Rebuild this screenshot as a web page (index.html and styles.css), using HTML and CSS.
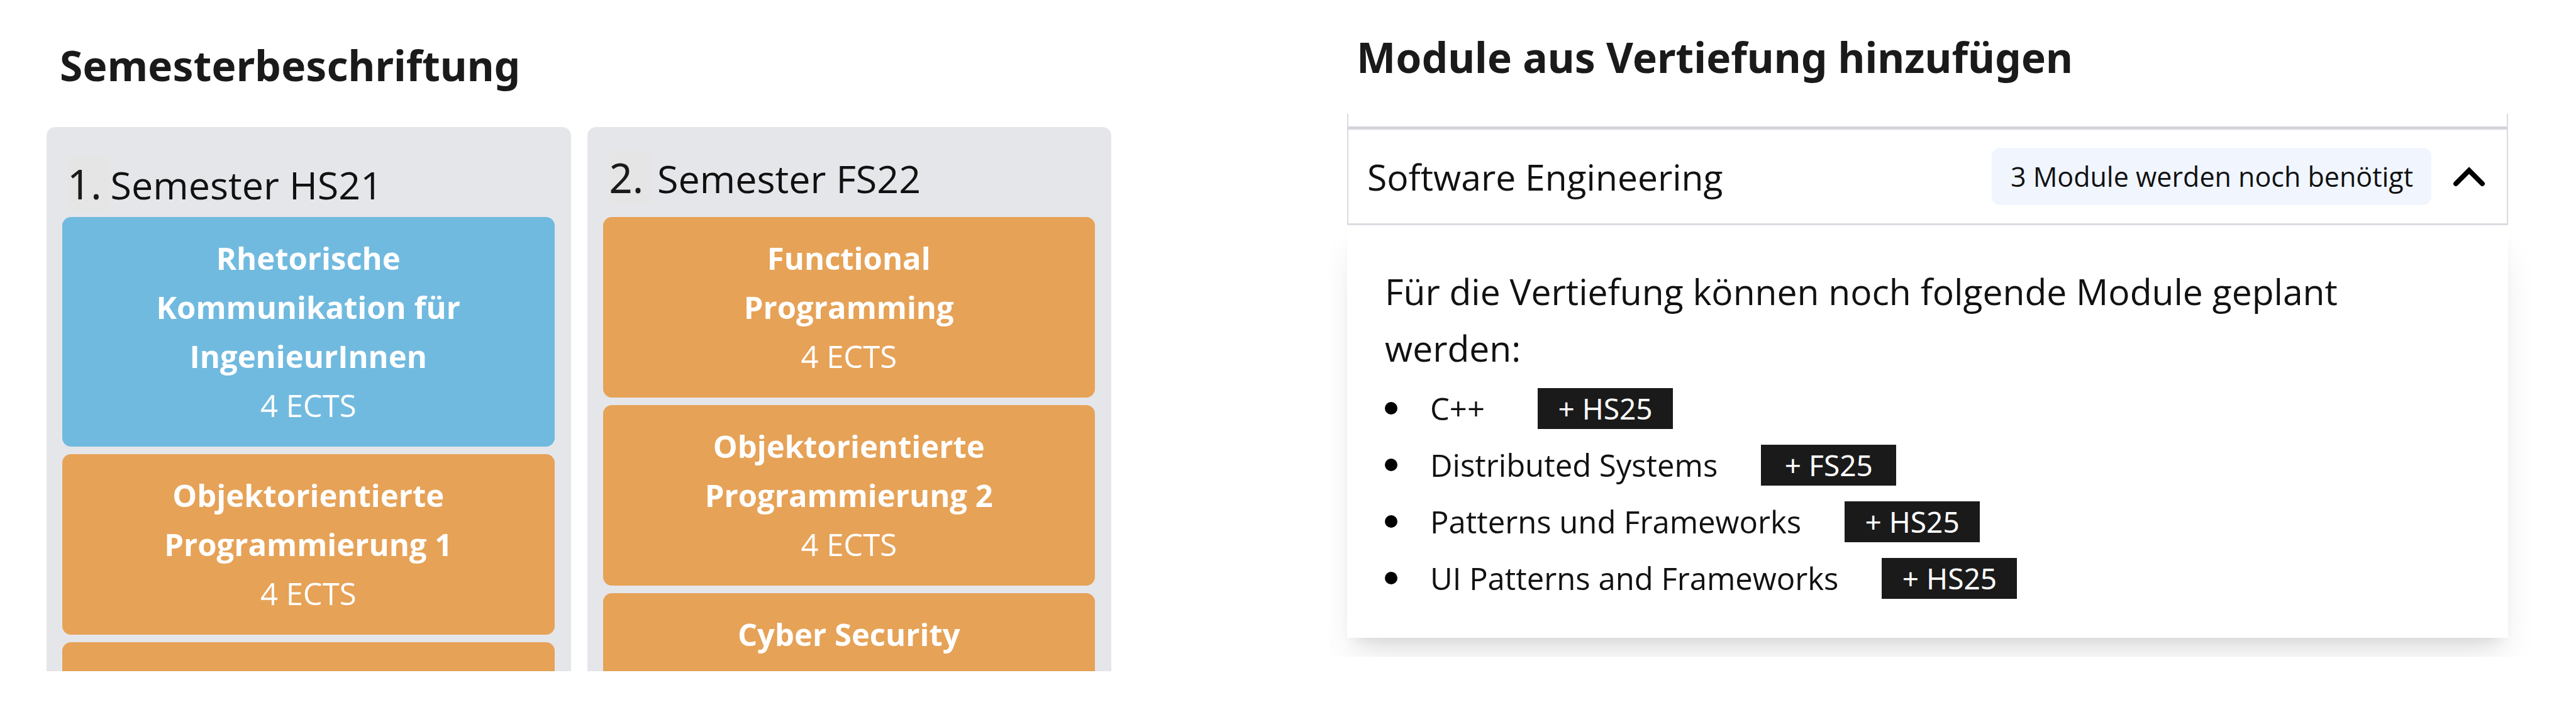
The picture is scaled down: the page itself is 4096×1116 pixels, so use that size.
FILE: index.html
```html
<!DOCTYPE html>
<html lang="de">
<head>
<meta charset="utf-8">
<title>Studienplanung</title>
<link rel="stylesheet" href="styles.css">
</head>
<body>
<main class="page">
  <section class="plan">
    <h2 class="heading">Semesterbeschriftung</h2>
    <div class="board">
      <article class="semester">
        <h3 class="semester-title"><span class="semester-number">1.</span>Semester HS21</h3>
        <div class="module module-blue"><strong>Rhetorische<br>Kommunikation für<br>IngenieurInnen</strong><span>4 ECTS</span></div>
        <div class="module"><strong>Objektorientierte<br>Programmierung 1</strong><span>4 ECTS</span></div>
        <div class="module module-cut"></div>
      </article>
      <article class="semester">
        <h3 class="semester-title semester-title-raised"><span class="semester-number">2.</span>Semester FS22</h3>
        <div class="module"><strong>Functional<br>Programming</strong><span>4 ECTS</span></div>
        <div class="module"><strong>Objektorientierte<br>Programmierung 2</strong><span>4 ECTS</span></div>
        <div class="module module-cut"><strong>Cyber Security</strong></div>
      </article>
    </div>
  </section>

  <section class="specialisation">
    <h2 class="heading heading-raised">Module aus Vertiefung hinzufügen</h2>
    <div class="accordion">
      <div class="accordion-previous"></div>
      <button class="accordion-header" type="button" aria-expanded="true" aria-controls="modules">
        <span class="accordion-title">Software Engineering</span>
        <span class="badge">3 Module werden noch benötigt</span>
        <svg class="chevron" viewBox="0 0 52 32" aria-hidden="true"><path d="M5 27 26 6 47 27"/></svg>
      </button>
      <div class="accordion-body" id="modules">
        <p class="intro">Für die Vertiefung können noch folgende Module geplant werden:</p>
        <ul class="options">
          <li class="option"><span class="option-name">C++</span><button class="add" type="button">+ HS25</button></li>
          <li class="option"><span class="option-name">Distributed Systems</span><button class="add" type="button">+ FS25</button></li>
          <li class="option"><span class="option-name">Patterns und Frameworks</span><button class="add" type="button">+ HS25</button></li>
          <li class="option"><span class="option-name">UI Patterns and Frameworks</span><button class="add" type="button">+ HS25</button></li>
        </ul>
      </div>
    </div>
  </section>
</main>
</body>
</html>
```
FILE: styles.css
```css
* { box-sizing: border-box; }

body {
  margin: 0;
  background: #fff;
  color: #111;
  font-family: "Open Sans", "Noto Sans", sans-serif;
}

h2, h3, p, ul { margin: 0; padding: 0; }

button {
  margin: 0;
  border: 0;
  font-family: inherit;
  color: inherit;
  cursor: pointer;
}

.page {
  display: grid;
  grid-template-columns: 1693fr 1846fr;
  column-gap: 375px;
  align-items: start;
  min-height: 100vh;
  padding: 0 108px 0 74px;
}

.heading {
  padding: 57px 21px 53px;
  font: bold 66px/92px "Noto Sans", sans-serif;
  color: #1a1a1a;
}

.heading-raised { padding: 44px 15px 45px; }

/* Semester columns */
.board {
  display: grid;
  grid-template-columns: 1fr 1fr;
  gap: 26px;
  height: 865px;
  overflow: hidden;
}

.semester {
  display: flex;
  flex-direction: column;
  gap: 12px;
  padding: 0 26px 0 25px;
  border-radius: 14px 14px 0 0;
  background: #e5e6ea;
}

.semester-title {
  display: flex;
  align-items: baseline;
  gap: 2px;
  margin-bottom: -5px;
  padding: 46px 8px 0;
  font-size: 61px;
  line-height: 88px;
  font-weight: 400;
}

.semester-title-raised {
  gap: 10px;
  margin-bottom: 5px;
  padding: 36px 10px 0;
}

.semester-number {
  padding-right: 12px;
  background: #e5e5e5;
  font-family: "Noto Sans", sans-serif;
  font-size: 65px;
  color: #1a1a1a;
}

.module {
  padding: 26px 24px 27px;
  border-radius: 14px;
  background: #e6a257;
  color: #fff;
  font-size: 49px;
  line-height: 78px;
  text-align: center;
}

.module strong, .module span { display: block; }

.module-blue { background: #71badf; }

.module-cut {
  flex: 1;
  border-radius: 14px 14px 0 0;
}

/* Specialisation accordion */
.accordion-previous {
  height: 25px;
  border: 2px solid #d9dbe1;
  border-width: 0 2px 5px;
  border-bottom-color: #d3d5da;
}

.accordion-header {
  display: flex;
  align-items: center;
  width: 100%;
  height: 152px;
  padding: 0 34px 0 30px;
  border: solid #d9dbe1;
  border-width: 0 2px 3px;
  background: #fff;
  text-align: left;
}

.accordion-title {
  flex: 1;
  font-size: 57px;
  line-height: 90px;
}

.badge {
  padding: 0 29px 0 30px;
  border-radius: 14px;
  background: #f0f5fe;
  font-size: 43px;
  line-height: 91px;
}

.chevron {
  width: 52px;
  height: 32px;
  margin-left: 34px;
  fill: none;
  stroke: #000;
  stroke-width: 8px;
  stroke-linecap: round;
  stroke-linejoin: miter;
}

.accordion-body {
  padding: 60px 120px 50px 60px;
  background: #fff;
  box-shadow: 0 37px 56px -11px rgba(0, 0, 0, .1), 0 15px 22px -12px rgba(0, 0, 0, .1);
  clip-path: inset(0 -35px -30px -28px);
}

.intro {
  font-size: 57px;
  line-height: 90px;
}

.options {
  padding-top: 6px;
  list-style: none;
}

.option {
  display: flex;
  align-items: center;
  font-size: 49px;
  line-height: 90px;
}

.option::before {
  content: "";
  width: 20px;
  height: 20px;
  margin-right: 52px;
  border-radius: 50%;
  background: #000;
}

.option-name { min-width: 102px; }

.add {
  width: 215px;
  height: 65px;
  margin-left: 69px;
  padding: 0;
  background: #1a1a1a;
  color: #fff;
  font: 46px/65px "Noto Sans", sans-serif;
}
```
